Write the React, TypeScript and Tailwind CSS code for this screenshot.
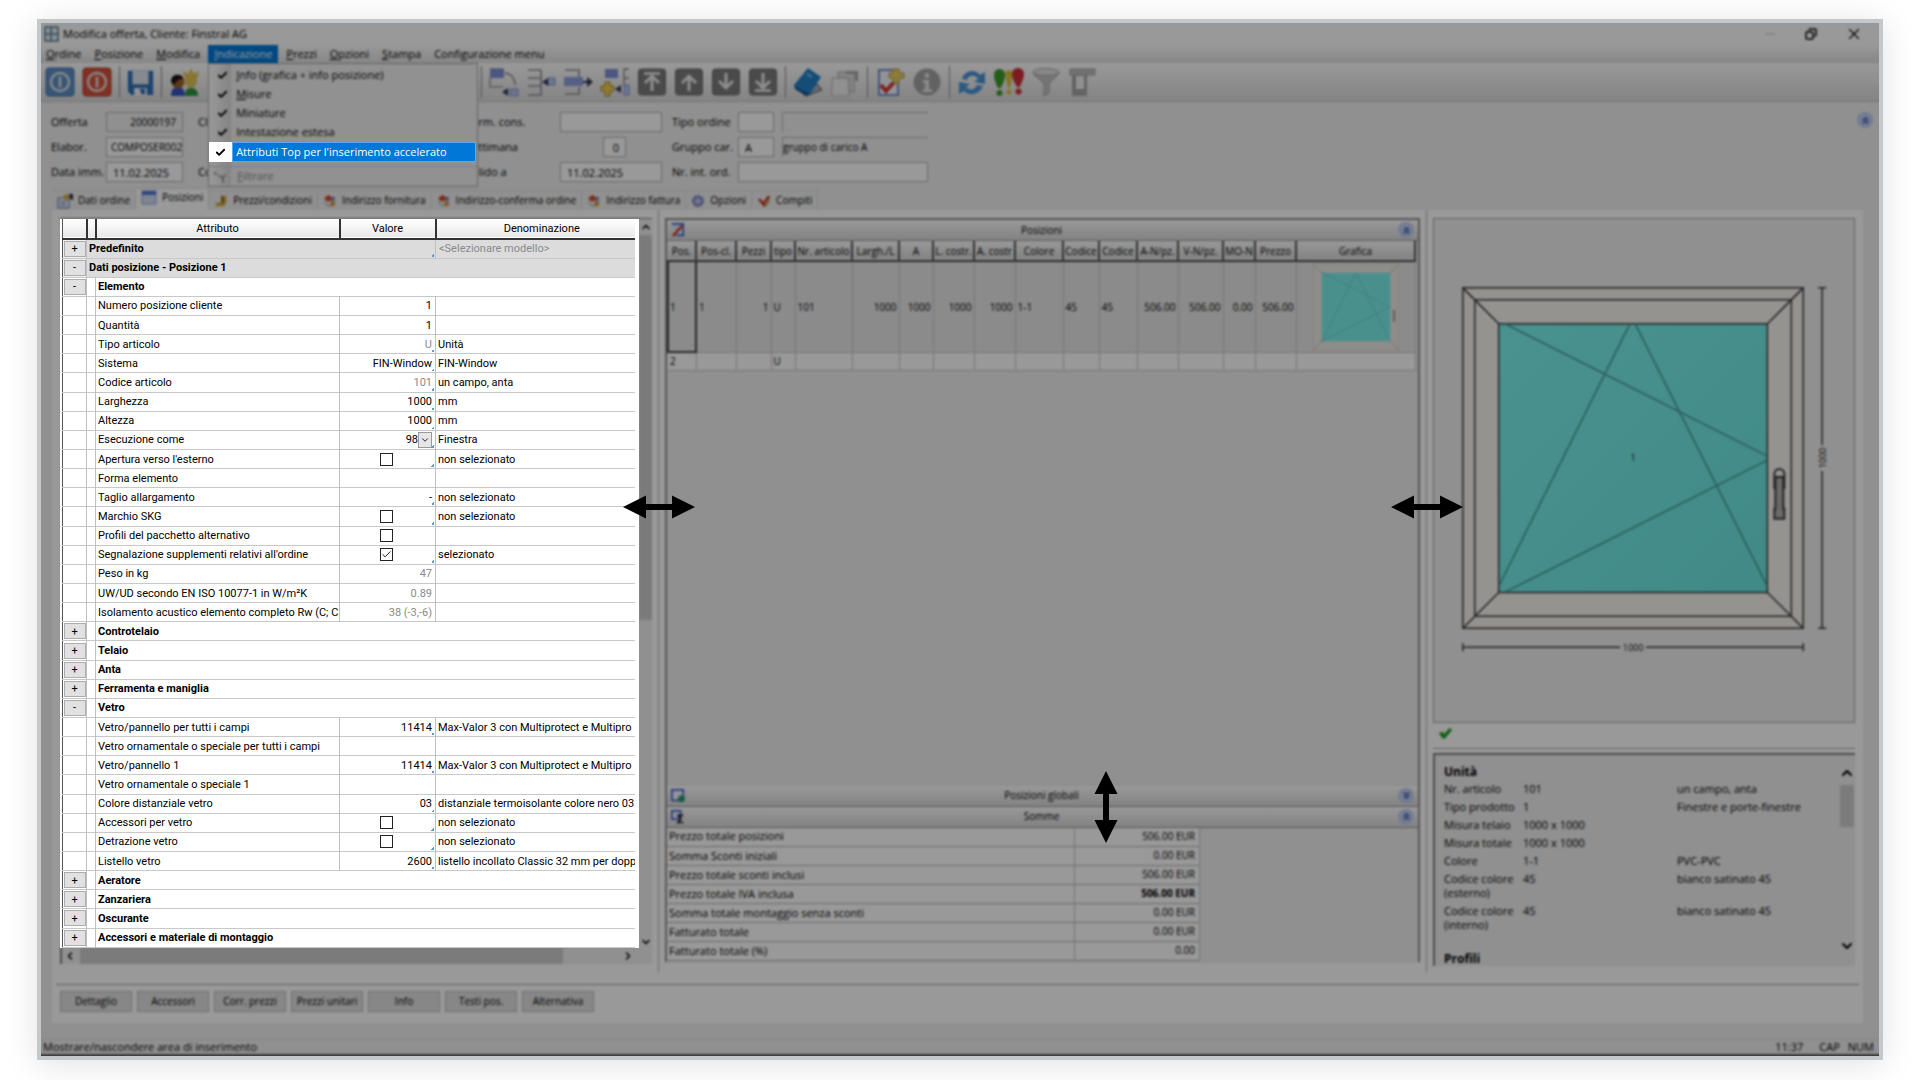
import type { ReactNode } from 'react'
import { Check, ChevronDown, ChevronLeft, ChevronRight, ChevronUp, ChevronsDown, ChevronsUp, Copy, Minus, X } from 'lucide-react'

type AttrRow = {
  kind: 'top' | 'group' | 'attr'
  label: string
  open?: boolean
  value?: string
  muted?: boolean
  check?: boolean
  select?: boolean
  corner?: boolean
  text?: string
}

const menuItems = ['Ordine', 'Posizione', 'Modifica', 'Indicazione', 'Prezzi', 'Opzioni', 'Stampa']

const attrRows: AttrRow[] = [
  { kind: 'top', label: 'Predefinito', text: '<Selezionare modello>', corner: true },
  { kind: 'top', label: 'Dati posizione - Posizione 1', open: true },
  { kind: 'group', label: 'Elemento', open: true },
  { kind: 'attr', label: 'Numero posizione cliente', value: '1' },
  { kind: 'attr', label: 'Quantità', value: '1' },
  { kind: 'attr', label: 'Tipo articolo', value: 'U', muted: true, corner: true, text: 'Unità' },
  { kind: 'attr', label: 'Sistema', value: 'FIN-Window', corner: true, text: 'FIN-Window' },
  { kind: 'attr', label: 'Codice articolo', value: '101', muted: true, corner: true, text: 'un campo, anta' },
  { kind: 'attr', label: 'Larghezza', value: '1000', corner: true, text: 'mm' },
  { kind: 'attr', label: 'Altezza', value: '1000', corner: true, text: 'mm' },
  { kind: 'attr', label: 'Esecuzione come', value: '98', select: true, corner: true, text: 'Finestra' },
  { kind: 'attr', label: "Apertura verso l'esterno", check: false, corner: true, text: 'non selezionato' },
  { kind: 'attr', label: 'Forma elemento' },
  { kind: 'attr', label: 'Taglio allargamento', value: '-', corner: true, text: 'non selezionato' },
  { kind: 'attr', label: 'Marchio SKG', check: false, corner: true, text: 'non selezionato' },
  { kind: 'attr', label: 'Profili del pacchetto alternativo', check: false },
  { kind: 'attr', label: "Segnalazione supplementi relativi all'ordine", check: true, corner: true, text: 'selezionato' },
  { kind: 'attr', label: 'Peso in kg', value: '47', muted: true },
  { kind: 'attr', label: 'UW/UD secondo EN ISO 10077-1 in W/m²K', value: '0.89', muted: true },
  { kind: 'attr', label: 'Isolamento acustico elemento completo Rw (C; C', value: '38 (-3,-6)', muted: true },
  { kind: 'group', label: 'Controtelaio' },
  { kind: 'group', label: 'Telaio' },
  { kind: 'group', label: 'Anta' },
  { kind: 'group', label: 'Ferramenta e maniglia' },
  { kind: 'group', label: 'Vetro', open: true },
  { kind: 'attr', label: 'Vetro/pannello per tutti i campi', value: '11414', corner: true, text: 'Max-Valor 3 con Multiprotect e Multipro' },
  { kind: 'attr', label: 'Vetro ornamentale o speciale per tutti i campi' },
  { kind: 'attr', label: 'Vetro/pannello 1', value: '11414', corner: true, text: 'Max-Valor 3 con Multiprotect e Multipro' },
  { kind: 'attr', label: 'Vetro ornamentale o speciale 1' },
  { kind: 'attr', label: 'Colore distanziale vetro', value: '03', corner: true, text: 'distanziale termoisolante colore nero 03' },
  { kind: 'attr', label: 'Accessori per vetro', check: false, corner: true, text: 'non selezionato' },
  { kind: 'attr', label: 'Detrazione vetro', check: false, corner: true, text: 'non selezionato' },
  { kind: 'attr', label: 'Listello vetro', value: '2600', corner: true, text: 'listello incollato Classic 32 mm per dopp' },
  { kind: 'group', label: 'Aeratore' },
  { kind: 'group', label: 'Zanzariera' },
  { kind: 'group', label: 'Oscurante' },
  { kind: 'group', label: 'Accessori e materiale di montaggio' },
]

const posColumns = [
  { label: 'Pos.', width: 28, value: '1', next: '2' },
  { label: 'Pos-cl.', width: 40, value: '1' },
  { label: 'Pezzi', width: 35, value: '1', right: true },
  { label: 'tipo', width: 24, value: 'U', next: 'U' },
  { label: 'Nr. articolo', width: 57, value: '101' },
  { label: 'Largh./L', width: 47, value: '1000', right: true },
  { label: 'A', width: 34, value: '1000', right: true },
  { label: 'L. costr.', width: 41, value: '1000', right: true },
  { label: 'A. costr', width: 41, value: '1000', right: true },
  { label: 'Colore', width: 48, value: '1-1' },
  { label: 'Codice', width: 36, value: '45' },
  { label: 'Codice', width: 38, value: '45' },
  { label: 'A-N/pz.', width: 41, value: '506.00', right: true },
  { label: 'V-N/pz.', width: 45, value: '506.00', right: true },
  { label: 'MO-N', width: 32, value: '0.00', right: true },
  { label: 'Prezzo', width: 41, value: '506.00', right: true },
]

const totals = [
  ['Prezzo totale posizioni', '506.00 EUR'],
  ['Somma Sconti iniziali', '0.00 EUR'],
  ['Prezzo totale sconti inclusi', '506.00 EUR'],
  ['Prezzo totale IVA inclusa', '506.00 EUR'],
  ['Somma totale montaggio senza sconti', '0.00 EUR'],
  ['Fatturato totale', '0.00 EUR'],
  ['Fatturato totale (%)', '0.00'],
]

const infoRows = [
  ['Nr. articolo', '101', 'un campo, anta'],
  ['Tipo prodotto', '1', 'Finestre e porte-finestre'],
  ['Misura telaio', '1000 x 1000', ''],
  ['Misura totale', '1000 x 1000', ''],
  ['Colore', '1-1', 'PVC-PVC'],
  ['Codice colore (esterno)', '45', 'bianco satinato 45'],
  ['Codice colore (interno)', '45', 'bianco satinato 45'],
]

const actions = ['Dettaglio', 'Accessori', 'Corr. prezzi', 'Prezzi unitari', 'Info', 'Testi pos.', 'Alternativa']

function Icon({ children }: { children: ReactNode }) {
  return (
    <svg viewBox="0 0 30 30" className="size-full" fill="none">
      {children}
    </svg>
  )
}

function PowerIcon({ color, edge }: { color: string; edge: string }) {
  return (
    <Icon>
      <rect x="1" y="1" width="28" height="28" rx="3" fill={color} stroke={edge} />
      <circle cx="15" cy="15" r="9" stroke="#e4e4e4" strokeWidth="2.4" />
      <path d="M15 9.500v11" stroke="#e4e4e4" strokeWidth="2.600" />
    </Icon>
  )
}

function SaveIcon() {
  return (
    <Icon>
      <path d="M1 2h28v27H5l-4-4z" fill="#2f6fb8" />
      <path d="M6 2h18v15H6z" fill="#dfe5ee" />
      <path d="M8 21h14v8H8z" fill="#f2f4f8" />
      <path d="M14 22h6v6h-4z" fill="#2f6fb8" />
    </Icon>
  )
}

function PeopleIcon() {
  return (
    <Icon>
      <path d="M2 29c0-7 3-9 7-9s7 2 7 9z" fill="#3a56c4" />
      <circle cx="9" cy="15" r="6.500" fill="#a0602f" />
      <path d="M2 15c0-6 4-8 8-7 3 0 4 2 4 4-4 0-7 1-8 6z" fill="#201410" />
      <path d="M16 29c0-6 2-8 6-8s7 2 7 8z" fill="#2c9440" />
      <path d="M22 1l3 6 5-3-2 8c0 5-2 9-6 9s-6-4-6-9l-2-8 5 3z" fill="#e2c455" />
    </Icon>
  )
}

function MoveIcon({ variant }: { variant: 'copy' | 'into' | 'out' | 'add' }) {
  return (
    <Icon>
      {variant === 'copy' && (
        <>
          <path d="M1 11v9h13M1 2h13" stroke="#9a9aa4" strokeWidth="1.500" />
          <path d="M1 2h14v9H1z" fill="#7d90d8" />
          <path d="M16 6c7 1 10 6 10 12" stroke="#8b8b95" strokeWidth="1.500" />
          <path d="M21 22h8v7h-8z" fill="#b9c4ee" stroke="#7d90d8" />
          <path d="M13 25l6-4v8z" fill="#333a58" />
        </>
      )}
      {variant === 'into' && (
        <>
          <path d="M2 3h13v8H2M2 19h13M2 28h13V19M15 11v8" stroke="#8d8d98" strokeWidth="1.600" />
          <path d="M22 11h7v7h-7z" fill="#b9c4ee" stroke="#7d90d8" />
          <path d="M16 15l6-4v8z" fill="#333a58" />
        </>
      )}
      {variant === 'out' && (
        <>
          <path d="M2 3h14v7M2 27h14v-7M2 3v0" stroke="#8d8d98" strokeWidth="1.600" />
          <path d="M1 10h19v9H1z" fill="#8ea0e2" />
          <path d="M20 15h5" stroke="#333a58" strokeWidth="2" />
          <path d="M24 10l6 5-6 5z" fill="#333a58" />
        </>
      )}
      {variant === 'add' && (
        <>
          <path d="M5 2h13v9H5z" fill="#7d90d8" />
          <path d="M29 2h-5v9h5M24 11v8" stroke="#8d8d98" strokeWidth="1.500" />
          <path d="M24 18h5v10h-5z" fill="#b9c4ee" stroke="#7d90d8" />
          <path d="M15 22l6-4v8z" fill="#333a58" />
          <path d="M5 15h5v4h4v5h-4v5H5v-5H1v-5h4z" fill="#f0cf50" stroke="#a88a30" />
        </>
      )}
    </Icon>
  )
}

function ArrowTile({ dir, bar }: { dir: 'up' | 'down'; bar?: boolean }) {
  return (
    <Icon>
      <rect x="1.500" y="2" width="27" height="26" rx="3" fill="#7c7c7c" stroke="#666" />
      <g transform={dir === 'down' ? 'rotate(180 15 15)' : undefined} stroke="#ececec" strokeWidth="3">
        <path d="M15 24V9M8 16l7-7 7 7" />
        {bar && <path d="M7 6.500h16" strokeWidth="2.500" />}
      </g>
    </Icon>
  )
}

function BookIcon() {
  return (
    <Icon>
      <path d="M9 26l15-9 5 6-16 6z" fill="#a9afb9" stroke="#4b5563" />
      <path d="M15 1l13 9-11 17L1 18z" fill="#2080c8" />
      <path d="M1 18l16 9-4 2L2 22z" fill="#155a94" />
      <path d="M14 7l5 3" stroke="#8fc4ea" strokeWidth="2" />
    </Icon>
  )
}

function SheetsIcon() {
  return (
    <Icon>
      <path d="M2 11h17v18H2z" fill="#f0f0f0" stroke="#b5b5b5" />
      <path d="M8 5h16v20h-5V11H8z" fill="#dcdcdc" stroke="#b0b0b0" />
      <path d="M16 4h12v10h-3V7h-9z" fill="#a8a8a8" />
    </Icon>
  )
}

function CheckSheetIcon() {
  return (
    <Icon>
      <path d="M4 3h19v25H4z" fill="#f4f6ff" stroke="#6f8fd0" strokeWidth="2" />
      <path d="M6 18l5 6 10-11" stroke="#d23a30" strokeWidth="4" />
      <path d="M18 2h6v4h5v5h-5v5h-6v-5h-4V6h4z" fill="#ecd060" stroke="#b59a3c" />
    </Icon>
  )
}

function InfoIcon() {
  return (
    <Icon>
      <circle cx="15" cy="15" r="13.500" fill="#a4a4a4" />
      <circle cx="15" cy="8.500" r="2.500" fill="#e4e4e4" />
      <path d="M11 13h6v9h3v3h-9v-3h2v-6h-2z" fill="#e4e4e4" />
    </Icon>
  )
}

function RefreshIcon() {
  return (
    <Icon>
      <path d="M5 12C7 4 18 1 23 8l5-3v12l-11-2 4-3c-3-5-10-4-11 1z" fill="#4a94d8" />
      <path d="M26 19c-3 8-13 11-19 5l-5 3V15l11 2-4 3c4 4 9 3 11-2z" fill="#4a94d8" />
    </Icon>
  )
}

function AlertsIcon() {
  return (
    <Icon>
      <path d="M11 7c0-5 8-5 8 0l-3 14h-2z" fill="#dcc040" />
      <circle cx="15" cy="25" r="2.500" fill="#dcc040" />
      <path d="M0 8c0-8 11-8 11 0 0 6-3 10-4 13H4C3 18 0 14 0 8z" fill="#3d9c28" />
      <circle cx="5.500" cy="26" r="3" fill="#3d9c28" />
      <path d="M18 7c0-8 12-8 12 0 0 5-3 9-4 13h-3c-2-4-5-8-5-13z" fill="#cf3038" />
      <circle cx="24.500" cy="24.500" r="3" fill="#cf3038" />
    </Icon>
  )
}

function FunnelIcon() {
  return (
    <Icon>
      <path d="M2 5c0 4 9 8 11 12v12l5-3v-9c2-4 10-8 10-12z" fill="#c4c4c4" stroke="#a0a0a0" />
      <ellipse cx="15" cy="5" rx="13" ry="3.500" fill="#e2e2e2" stroke="#a8a8a8" />
    </Icon>
  )
}

function ColumnIcon() {
  return (
    <Icon>
      <path d="M2 2h25v6H2z" fill="#bdbdbd" stroke="#a2a2a2" />
      <path d="M4 8h15v21H4z" fill="#a5a5a5" />
      <path d="M8 9h8v13H8z" fill="#f1f1f1" />
    </Icon>
  )
}

const toolbar: { id: string; icon?: ReactNode }[] = [
  { id: 'copy', icon: <MoveIcon variant="copy" /> },
  { id: 'into', icon: <MoveIcon variant="into" /> },
  { id: 'out', icon: <MoveIcon variant="out" /> },
  { id: 'add', icon: <MoveIcon variant="add" /> },
  { id: 'first', icon: <ArrowTile dir="up" bar /> },
  { id: 'prev', icon: <ArrowTile dir="up" /> },
  { id: 'next', icon: <ArrowTile dir="down" /> },
  { id: 'last', icon: <ArrowTile dir="down" bar /> },
  { id: 'sep1' },
  { id: 'book', icon: <BookIcon /> },
  { id: 'sheets', icon: <SheetsIcon /> },
  { id: 'sep2' },
  { id: 'check', icon: <CheckSheetIcon /> },
  { id: 'info', icon: <InfoIcon /> },
  { id: 'sep3' },
  { id: 'refresh', icon: <RefreshIcon /> },
  { id: 'alerts', icon: <AlertsIcon /> },
  { id: 'funnel', icon: <FunnelIcon /> },
  { id: 'column', icon: <ColumnIcon /> },
]

function ToolButton({ children }: { children: ReactNode }) {
  return (
    <button type="button" className="size-[30px] shrink-0">
      {children}
    </button>
  )
}

function Separator() {
  return <span className="h-8 w-px shrink-0 bg-[#8a8a8a]" />
}

function AddressIcon() {
  return (
    <svg viewBox="0 0 16 16" className="size-3.5">
      <path d="M4 6h6v6l-3 2-4-3z" fill="#f2f2f2" stroke="#888" />
      <path d="M1 5l5-4 5 3-4 5z" fill="#d8472a" />
      <path d="M10 3l4 1-1 4-3-1z" fill="#5d86cf" />
      <circle cx="11" cy="11" r="3" fill="#d99a4a" />
    </svg>
  )
}

const tabs = [
  {
    label: 'Dati ordine',
    icon: (
      <svg viewBox="0 0 16 16" className="size-4">
        <path d="M1 5h11v10H1z" fill="#e8ecf6" stroke="#5a6fae" />
        <path d="M3 9h6M3 12h6" stroke="#5a6fae" />
        <path d="M6 3l4-2 4 3-5 4z" fill="#d9ad35" />
        <path d="M12 1h4v6l-3-1z" fill="#2a2e55" />
      </svg>
    ),
  },
  {
    label: 'Posizioni',
    icon: (
      <svg viewBox="0 0 16 16" className="size-4">
        <path d="M1 1h14v13H1z" fill="#d5def5" stroke="#8aa0e0" />
        <path d="M1 1h14v4H1z" fill="#5878d0" />
      </svg>
    ),
  },
  {
    label: 'Prezzi/condizioni',
    icon: (
      <svg viewBox="0 0 16 16" className="size-3.5">
        <path d="M8 2h6v8l-3 4H2v-4h6z" fill="#d3a53a" />
        <path d="M8 2l3 2v6H8z" fill="#8c6a1c" />
      </svg>
    ),
  },
  { label: 'Indirizzo fornitura', icon: <AddressIcon /> },
  { label: 'Indirizzo-conferma ordine', icon: <AddressIcon /> },
  { label: 'Indirizzo fattura', icon: <AddressIcon /> },
  {
    label: 'Opzioni',
    icon: (
      <svg viewBox="0 0 16 16" className="size-3.5">
        <circle cx="8" cy="8" r="7" fill="#8e92cc" />
        <circle cx="8" cy="8" r="3" fill="#c7caec" />
      </svg>
    ),
  },
  {
    label: 'Compiti',
    icon: (
      <svg viewBox="0 0 16 16" className="size-3.5">
        <path d="M1 6l3-1 3 4 6-8 2 3-7 11z" fill="#c8352c" />
        <path d="M9 10l4-5 2 3-5 7z" fill="#c9a55a" />
      </svg>
    ),
  },
]

function RoundChevron({ down }: { down?: boolean }) {
  return (
    <button type="button" className="grid size-4 shrink-0 place-items-center rounded-full bg-[#c0cff2] text-[#3a58b0]">
      {down ? <ChevronsDown size={11} strokeWidth={3} /> : <ChevronsUp size={11} strokeWidth={3} />}
    </button>
  )
}

function ResizeArrow({ vertical }: { vertical?: boolean }) {
  return (
    <svg viewBox="0 0 72 24" className={vertical ? 'w-[72px] rotate-90' : 'w-[72px]'} fill="#000">
      <path d="M0 12L23 0.500V9h26V0.500L72 12L49 23.500V15H23v8.500z" />
    </svg>
  )
}

function Splitter() {
  return (
    <div className="relative mx-1.5 w-px shrink-0 bg-[#b4b4b4]">
      <span className="absolute top-[39%] left-1/2 z-30 -translate-x-1/2 -translate-y-1/2">
        <ResizeArrow />
      </span>
    </div>
  )
}

function ViewMenu() {
  const entries = ['Info (grafica + info posizione)', 'Misure', 'Miniature', 'Intestazione estesa']
  return (
    <div className="absolute top-full left-0 flex w-[270px] flex-col border border-[#a8a8a8] bg-[linear-gradient(to_right,#fff_0px,#dcdcdc_22px,#f2f2f2_22px)] pt-0.5">
      {entries.map((entry) => (
        <button key={entry} type="button" className="flex h-[19px] items-center text-left">
          <Check size={11} strokeWidth={4} className="mr-2 ml-2" />
          <span className={entry === 'Misure' || entry.startsWith('Info') ? 'first-letter:underline' : undefined}>{entry}</span>
        </button>
      ))}
      <button type="button" className="relative z-20 mr-px flex h-5 items-center bg-[linear-gradient(to_right,#fff,#e4e4e4)] text-left">
        <span className="flex w-[23px] justify-center">
          <Check size={11} strokeWidth={4} />
        </span>
        <span className="flex h-full flex-1 items-center border border-[#5aa9ee] bg-[#0078d7] pl-[3px] text-white">
          Attributi Top per l&apos;inserimento accelerato
        </span>
      </button>
      <button type="button" className="mt-1 flex h-5 items-center border-t border-[#d0d0d0] text-left text-[#8a8a8a]">
        <svg viewBox="0 0 16 16" className="mr-2 ml-1 size-4" fill="none" stroke="#a0a0a0" strokeWidth="2">
          <path d="M1 3l3 3M6 6c2 3 3 3 7 0M10 8v6" />
        </svg>
        <span className="first-letter:underline">Filtrare</span>
      </button>
    </div>
  )
}

function Toggle({ open, label }: { open?: boolean; label: string }) {
  return (
    <button
      type="button"
      aria-label={label}
      className="mx-auto flex h-4 w-[22px] items-center justify-center border border-[#adadad] bg-[#e1e1e1] text-[11px] leading-none"
    >
      {open ? '-' : '+'}
    </button>
  )
}

function Corner() {
  return <span className="absolute right-px bottom-px size-[3px] bg-[linear-gradient(135deg,transparent_50%,#5b9bd5_50%)]" />
}

function ValueCell({ row }: { row: AttrRow }) {
  if (row.check !== undefined) {
    return (
      <span className="relative mx-auto block size-[13px]">
        <input
          type="checkbox"
          defaultChecked={row.check}
          aria-label={row.label}
          className="block size-[13px] appearance-none border border-[#222] bg-white"
        />
        {row.check && <Check size={11} strokeWidth={2} className="pointer-events-none absolute top-px left-px" />}
      </span>
    )
  }
  if (row.select) {
    return (
      <span className="flex h-4 items-center justify-end">
        <select aria-label={row.label} className="w-8 appearance-none text-right [text-align-last:right]">
          <option>{row.value}</option>
        </select>
        <span className="grid h-4 w-3.5 place-items-center border border-[#9a9a9a] bg-[#e6e6e6]">
          <ChevronDown size={10} />
        </span>
      </span>
    )
  }
  return <>{row.value}</>
}

function AttributeTable() {
  return (
    <table className="h-full w-full table-fixed border-collapse border-l border-[#555] font-[Roboto,sans-serif] leading-none">
      <colgroup>
        <col className="w-6" />
        <col className="w-[9px]" />
        <col className="w-[244px]" />
        <col className="w-24" />
        <col />
      </colgroup>
      <thead>
        <tr className="h-5 border-b-2 border-[#333] bg-linear-to-b from-white to-[#e9e9e9]">
          <th className="border-r-2 border-[#333] p-0" />
          <th className="border-r-2 border-[#333] p-0" />
          <th className="border-r-2 border-[#333] p-0 font-normal">Attributo</th>
          <th className="border-r-2 border-[#333] p-0 font-normal">Valore</th>
          <th className="p-0 pl-3 font-normal">Denominazione</th>
        </tr>
      </thead>
      <tbody>
        {attrRows.map((row) => {
          const toggle = row.kind !== 'attr' && <Toggle open={row.open} label={row.label} />
          if (row.kind === 'top') {
            return (
              <tr key={row.label} className="h-[19px] border-b border-[#c8c8c8] bg-[#dcdcdc]">
                <td className="border-r border-[#c0c0c0] bg-[#f0f0f0] p-0">{toggle}</td>
                <td colSpan={row.text ? 3 : 4} className="relative p-0 pl-0.5 font-bold">
                  {row.label}
                  {row.corner && <Corner />}
                </td>
                {row.text && <td className="border-l border-[#c0c0c0] p-0 pl-[3px] text-[#8a8a8a]">{row.text}</td>}
              </tr>
            )
          }
          return (
            <tr key={row.label} className="h-[19px] border-b border-[#c8c8c8]">
              <td className="border-r border-[#c0c0c0] p-0">{toggle}</td>
              <td className="border-r border-[#c0c0c0] p-0" />
              {row.kind === 'group' ? (
                <td colSpan={3} className="p-0 pl-0.5 font-bold">
                  {row.label}
                </td>
              ) : (
                <>
                  <td className="overflow-hidden border-r border-[#c0c0c0] p-0 pl-0.5 whitespace-nowrap">{row.label}</td>
                  <td className={`relative border-r border-[#c0c0c0] p-0 pr-[3px] text-right ${row.muted ? 'text-[#8a8a8a]' : ''}`}>
                    <ValueCell row={row} />
                    {row.corner && <Corner />}
                  </td>
                  <td className="overflow-hidden p-0 pl-0.5 whitespace-nowrap">{row.text}</td>
                </>
              )}
            </tr>
          )
        })}
      </tbody>
    </table>
  )
}

function WindowThumb() {
  return (
    <svg viewBox="0 0 90 90" className="mx-auto block size-[88px]" fill="none" stroke="#c4c0ba">
      <path d="M1 1h88v88H1z" fill="#eeebe6" stroke="#e0dcd6" />
      <path d="M1 1l10 10M89 1L79 11M1 89l10-10M89 89L79 79" />
      <path d="M10 10h70v70H10z" fill="#7bf0eb" stroke="none" />
      <path d="M10 10l70 35L10 80L45 10L80 80" stroke="#6ed2ce" />
      <path d="M84 48v12" stroke="#999" strokeWidth="2" />
    </svg>
  )
}

function WindowDrawing() {
  return (
    <svg viewBox="-29 -69 422 505" className="h-full w-full" fill="none" stroke="#3a3a3a" strokeWidth="1.500">
      <defs>
        <linearGradient id="glass" x1="0" y1="0" x2="1" y2="1">
          <stop offset="0" stopColor="#7cf4ef" />
          <stop offset="1" stopColor="#6ce6e2" />
        </linearGradient>
      </defs>
      <path d="M0 0h342v342H0z" fill="#f7f4ef" />
      <path d="M12 12h318v318H12z" fill="#f9f6f1" />
      <path d="M0 0l36 36M342 0l-36 36M0 342l36-36M342 342l-36-36" />
      <path d="M36 36h270v270H36z" fill="url(#glass)" />
      <path d="M42 36l264 133M306 173L42 306M36 300L168 36M173 36l133 264" stroke="#459793" />
      <text x="171" y="174" textAnchor="middle" fontSize="9" fill="#111" stroke="none">
        1
      </text>
      <path d="M313 202v-15a5 5 0 0 1 10 0v15" strokeWidth="2" />
      <path d="M315 190h7v32h1v10h-10v-10h1v-32z" strokeWidth="2" fill="#b4b0ac" />
      <path d="M361 0v158M361 184v158M357 0h8M357 342h8M0 361h158M184 361h158M0 357v8M342 357v8" />
      <text x="171" y="365" textAnchor="middle" fontSize="9" fill="#111" stroke="none">
        1000
      </text>
      <text x="361" y="175" textAnchor="middle" fontSize="9" fill="#111" stroke="none" transform="rotate(-90 361 171)">
        1000
      </text>
    </svg>
  )
}

function PanelBar({ title, children, down }: { title: string; children: ReactNode; down?: boolean }) {
  return (
    <div className="flex h-[21px] shrink-0 items-center border-b border-[#999] bg-linear-to-b from-white to-[#dadada] px-1 text-[10px]">
      <svg viewBox="0 0 16 16" className="size-3.5">
        {children}
      </svg>
      <span className="flex-1 text-center">{title}</span>
      <RoundChevron down={down} />
    </div>
  )
}

function PositionsPane() {
  return (
    <section className="flex min-w-0 flex-1 flex-col border-2 border-[#8f8f8f] border-b-transparent bg-[#f0f0f0]">
      <PanelBar title="Posizioni">
        <path d="M1 1h13v13H6" fill="#dfe6fa" stroke="#3f66d0" strokeWidth="2" />
        <path d="M2 15L13 3" stroke="#d0402e" strokeWidth="3" />
      </PanelBar>
      <table className="w-[749px] table-fixed border-collapse text-[10px] leading-none">
        <colgroup>
          {posColumns.map((col, i) => (
            <col key={i} style={{ width: col.width }} />
          ))}
          <col />
        </colgroup>
        <thead>
          <tr className="h-5 border-b-2 border-[#444] bg-linear-to-b from-white to-[#dadada]">
            {posColumns.map((col, i) => (
              <th key={i} className="overflow-hidden border-r-2 border-[#555] p-0 font-normal whitespace-nowrap">
                {col.label}
              </th>
            ))}
            <th className="border-r-2 border-[#555] p-0 font-normal">Grafica</th>
          </tr>
        </thead>
        <tbody>
          <tr className="h-[91px] border-b border-[#c4c4c4] bg-[#e8e8e8]">
            {posColumns.map((col, i) => (
              <td
                key={i}
                className={`border-r border-[#c4c4c4] p-0 px-0.5 first:border-2 first:border-[#444] first:px-px ${col.right ? 'text-right' : ''}`}
              >
                {col.value}
              </td>
            ))}
            <td className="border-r border-[#c4c4c4] p-0">
              <WindowThumb />
            </td>
          </tr>
          <tr className="h-[18px] border-b border-[#c4c4c4] bg-white">
            {posColumns.map((col, i) => (
              <td key={i} className="border-r border-[#c4c4c4] p-0 px-0.5">
                {col.next}
              </td>
            ))}
            <td className="border-r border-[#c4c4c4]" />
          </tr>
        </tbody>
      </table>

      <div className="mt-auto">
        <PanelBar title="Posizioni globali" down>
          <path d="M1 1h13v12H1z" fill="#f4f7ff" stroke="#3f66d0" strokeWidth="2" />
          <circle cx="12" cy="11" r="4" fill="#2c9a6c" />
        </PanelBar>
        <div className="relative">
          <PanelBar title="Somme">
            <path d="M1 1h10v9H1z" fill="#f4f7ff" stroke="#3f66d0" strokeWidth="2" />
            <path d="M14 6H8l3 4-3 4h6" fill="none" stroke="#222" strokeWidth="2" />
          </PanelBar>
          <span className="absolute top-0 left-[58.5%] z-30 -translate-x-1/2 -translate-y-1/2">
            <ResizeArrow vertical />
          </span>
        </div>
        <table className="w-[533px] table-fixed border-collapse bg-white leading-none">
          <tbody>
            {totals.map(([label, amount]) => (
              <tr key={label} className="h-[19px] border-b border-[#b4b4b4]">
                <td className="w-[407px] border-r border-[#c4c4c4] p-0 pb-0.5 pl-0.5">{label}</td>
                <td
                  className={`border-r border-[#c4c4c4] p-0 pr-1 pb-0.5 text-right text-[10px] ${label.includes('IVA') ? 'font-bold' : ''}`}
                >
                  {amount}
                </td>
              </tr>
            ))}
          </tbody>
        </table>
      </div>
    </section>
  )
}

function PreviewPane() {
  return (
    <section className="flex w-[422px] shrink-0 flex-col">
      <div className="min-h-0 flex-1 border border-[#a8a8a8] bg-[#f0f0f0]">
        <WindowDrawing />
      </div>
      <div className="flex h-[26px] items-center border-b border-[#a8a8a8] pb-1 pl-1.5">
        <svg viewBox="0 0 16 14" className="w-3.5" fill="#23a01e">
          <path d="M0 7l4-2 2 3 6-7 3 2-8 10H4z" />
        </svg>
      </div>
      <div className="mt-1 flex h-[213px] overflow-hidden border-t-2 border-l-2 border-[#808080] bg-[#f0f0f0] pt-2.5 pl-[9px]">
        <div className="min-w-0 flex-1 leading-[14px]">
          <h2 className="mb-[3px] text-xs leading-[14px] font-bold">Unità</h2>
          <dl className="mb-5">
            {infoRows.map(([label, value, text]) => (
              <div key={label} className="mb-1 grid grid-cols-[79px_154px_1fr] leading-[14px]">
                <dt className="pr-1.5">{label}</dt>
                <dd>{value}</dd>
                <dd>{text}</dd>
              </div>
            ))}
          </dl>
          <h2 className="text-xs leading-[14px] font-bold">Profili</h2>
        </div>
        <div className="flex w-4 flex-col items-center pb-3">
          <ChevronUp size={16} strokeWidth={3} />
          <span className="mt-1 h-[42px] w-3.5 bg-[#cdcdcd]" />
          <ChevronDown size={16} strokeWidth={3} className="mt-auto" />
        </div>
      </div>
    </section>
  )
}

const field = 'h-5 border border-[#b4b4b4] bg-white px-1.5'

function OrderHeader() {
  return (
    <div className="flex justify-between pt-2.5 pr-1.5 pl-2.5">
      <div className="grid grid-cols-[55px_92px_268px_94px_112px_66px_44px_146px] items-center gap-y-[5px]">
        <label htmlFor="offerta">Offerta</label>
        <input id="offerta" defaultValue="20000197" className={`${field} w-[77px] bg-[#f0f0f0]! text-right text-[10px]`} />
        <span>Cliente</span>
        <label htmlFor="cons">Term. cons.</label>
        <input id="cons" className={`${field} w-[102px]`} />
        <label htmlFor="tipo">Tipo ordine</label>
        <input id="tipo" className={`${field} w-9`} />
        <output className="h-5 border-t border-l border-[#b4b4b4]" />

        <label htmlFor="elabor">Elabor.</label>
        <input id="elabor" defaultValue="COMPOSER002" className="h-5 w-[77px] border border-[#b4b4b4] bg-white pl-1 text-[10px]" />
        <span />
        <label htmlFor="settimana">Settimana</label>
        <input id="settimana" defaultValue="0" className={`${field} ml-[43px] w-[23px] text-right`} />
        <label htmlFor="gruppo">Gruppo car.</label>
        <input id="gruppo" defaultValue="A" className={`${field} w-9`} />
        <output className="flex h-5 items-center border-t border-l border-[#b4b4b4] text-[10px]">gruppo di carico A</output>

        <label htmlFor="data">Data imm.</label>
        <input id="data" defaultValue="11.02.2025" className={`${field} w-[77px]`} />
        <span>Cons.</span>
        <label htmlFor="valido">Valido a</label>
        <input id="valido" defaultValue="11.02.2025" className={`${field} w-[102px]`} />
        <label htmlFor="interno">Nr. int. ord.</label>
        <input id="interno" className={`${field} col-span-2 w-[190px]`} />
      </div>
      <RoundChevron />
    </div>
  )
}

export default function App() {
  return (
    <div className="flex h-screen bg-white px-[37px] pt-[19px] pb-5 font-['Open_Sans','Noto_Sans',sans-serif] text-[11px] text-black">
      <div className="relative isolate flex min-w-0 flex-1 flex-col border-4 border-[#c3c8cc] bg-[#f0f0f0] shadow-[0_4px_32px_rgba(0,0,0,0.12)]">
        <header className="flex h-[22px] shrink-0 items-center bg-white pl-0.5">
          <svg viewBox="0 0 16 16" className="size-4" fill="#dff2f8" stroke="#5c7c8c" strokeWidth="1.500">
            <path d="M2 1h13v14H2zM8 1v14M2 8h13" />
          </svg>
          <h1 className="flex-1 pl-1 text-[11px]">Modifica offerta, Cliente: Finstral AG</h1>
          <div className="flex items-center gap-7 pr-4">
            <button type="button" aria-label="Riduci" className="text-[#bbb]"><Minus size={14} strokeWidth={1.5} /></button>
            <button type="button" aria-label="Ripristina"><Copy size={12} strokeWidth={3} className="-scale-x-100" /></button>
            <button type="button" aria-label="Chiudi"><X size={18} strokeWidth={1.5} /></button>
          </div>
        </header>

        <nav className="flex h-[18px] shrink-0 items-center gap-[3px] bg-linear-to-b from-white to-[#e0e0e0]">
          {menuItems.map((item) =>
            item === 'Indicazione' ? (
              <div key={item} className="relative h-full">
                <button type="button" className="h-full bg-[#0078d7] px-1.5 leading-[18px] text-white first-letter:underline">
                  {item}
                </button>
                <ViewMenu />
              </div>
            ) : (
              <button key={item} type="button" className="px-[5px] first-letter:underline">
                {item}
              </button>
            )
          )}
          <button type="button" className="px-[5px]">Configurazione menu</button>
        </nav>

        <div className="flex h-[39px] shrink-0 items-center gap-[7px] border-b border-[#c4c4c4] bg-linear-to-b from-white to-[#dcdcdc] pl-1">
          <ToolButton><PowerIcon color="#5b8fc8" edge="#3d6ea4" /></ToolButton>
          <ToolButton><PowerIcon color="#d8503a" edge="#a83c2a" /></ToolButton>
          <Separator />
          <button type="button" className="w-[27px] shrink-0"><SaveIcon /></button>
          <Separator />
          <ToolButton><PeopleIcon /></ToolButton>
          <ToolButton><PeopleIcon /></ToolButton>
          <span className="w-[231px] shrink-0" />
          <Separator />
          {toolbar.map((tool) =>
            tool.icon ? <ToolButton key={tool.id}>{tool.icon}</ToolButton> : <Separator key={tool.id} />
          )}
        </div>

        <OrderHeader />

        <div role="tablist" className="mt-1.5 ml-[11px] flex items-end text-[10px]">
          {tabs.map((tab) => (
            <button
              key={tab.label}
              type="button"
              role="tab"
              aria-selected={tab.label === 'Posizioni'}
              className="flex h-5 items-center gap-[5px] border-t border-r border-[#dedede] px-[5px] aria-selected:h-[22px] aria-selected:bg-white aria-selected:pb-1"
            >
              {tab.icon}
              {tab.label}
            </button>
          ))}
        </div>

        <main className="mr-4 mb-4 ml-[11px] flex min-h-0 flex-1 flex-col bg-white">
          <div className="mr-2 ml-2 flex min-h-0 flex-1">
            <section className="mt-2 mb-2 flex w-[592px] shrink-0 flex-col border-t border-[#808080] bg-[#f0f0f0]">
              <div className="flex min-h-0 flex-1">
                <div className="relative z-20 w-[579px] shrink-0 bg-white pr-1 pl-0.5">
                  <AttributeTable />
                </div>
                <div className="flex flex-1 flex-col items-center bg-[#f0f0f0]">
                  <ChevronUp size={12} strokeWidth={3} className="my-0.5" />
                  <span className="h-[385px] w-full bg-[#cdcdcd]" />
                  <ChevronDown size={12} strokeWidth={3} className="mt-auto" />
                </div>
              </div>
              <div className="flex h-4 items-center border-l-2 border-[#808080] px-0.5">
                <ChevronLeft size={12} strokeWidth={3} />
                <span className="ml-1 h-full w-[483px] bg-[#cdcdcd]" />
                <ChevronRight size={12} strokeWidth={3} className="mr-4 ml-auto" />
              </div>
            </section>
            <Splitter />
            <div className="mt-2 mb-[9px] flex min-w-0 flex-1">
              <PositionsPane />
            </div>
            <Splitter />
            <div className="mt-2 mb-1.5 flex shrink-0">
              <PreviewPane />
            </div>
          </div>
          <footer className="mx-1 mt-3 flex h-[39px] shrink-0 items-start gap-[5px] border-t border-[#a0a0a0] pt-1.5 pl-1">
            {actions.map((action) => (
              <button key={action} type="button" className="h-[21px] w-[72px] border border-[#bcbcbc] bg-[#e1e1e1] text-[10px]">
                {action}
              </button>
            ))}
          </footer>
        </main>

        <div className="flex h-[17px] shrink-0 items-center justify-between border-t border-b-2 border-t-[#dedede] border-b-[#606060] pr-1 pl-0.5">
          <span>Mostrare/nascondere area di inserimento</span>
          <div className="flex gap-4 pr-px">
            <span>11:37</span>
            <span>CAP</span>
            <span className="-ml-2">NUM</span>
          </div>
        </div>

        <div className="pointer-events-none absolute inset-0 z-10 bg-black/40 backdrop-blur-[1px]" />
      </div>
    </div>
  )
}
